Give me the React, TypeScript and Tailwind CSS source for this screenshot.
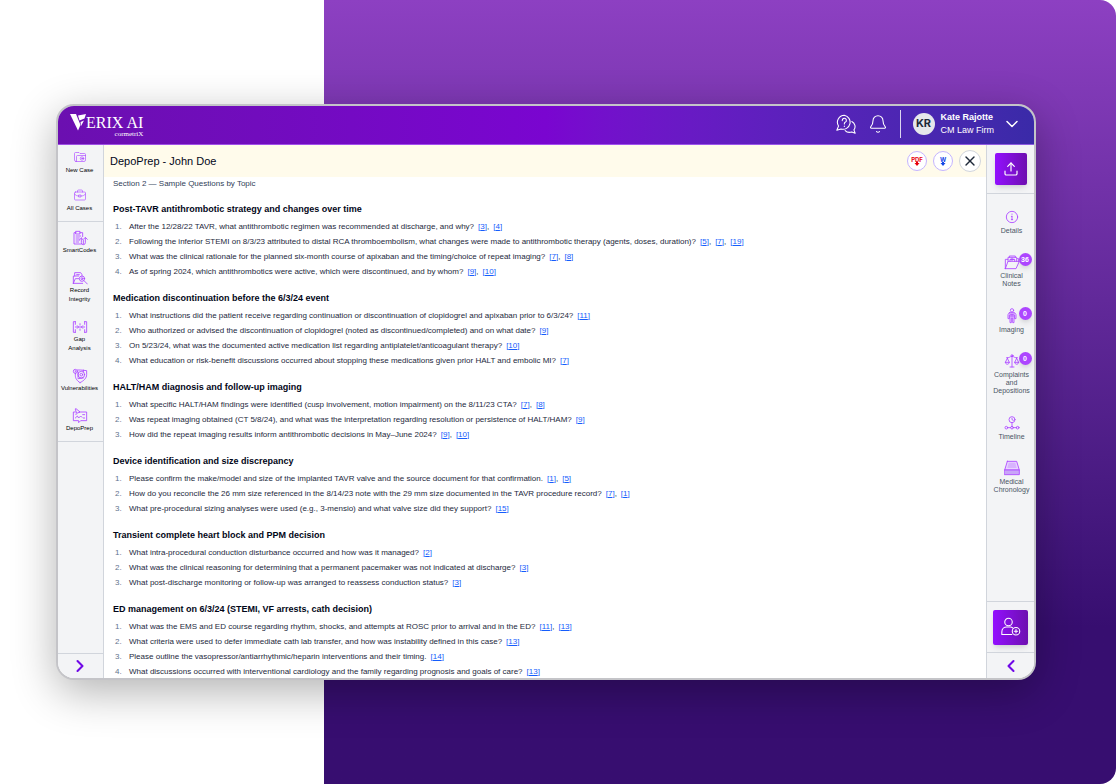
import type { ReactNode } from "react"
import { Bell, ChevronDown, ChevronLeft, ChevronRight, Upload, X } from "lucide-react"

type Question = { text: string; refs: number[] }
type Topic = { title: string; questions: Question[] }

const topics: Topic[] = [
  {
    title: "Post-TAVR antithrombotic strategy and changes over time",
    questions: [
      { text: "After the 12/28/22 TAVR, what antithrombotic regimen was recommended at discharge, and why?", refs: [3, 4] },
      {
        text: "Following the inferior STEMI on 8/3/23 attributed to distal RCA thromboembolism, what changes were made to antithrombotic therapy (agents, doses, duration)?",
        refs: [5, 7, 19],
      },
      { text: "What was the clinical rationale for the planned six-month course of apixaban and the timing/choice of repeat imaging?", refs: [7, 8] },
      { text: "As of spring 2024, which antithrombotics were active, which were discontinued, and by whom?", refs: [9, 10] },
    ],
  },
  {
    title: "Medication discontinuation before the 6/3/24 event",
    questions: [
      { text: "What instructions did the patient receive regarding continuation or discontinuation of clopidogrel and apixaban prior to 6/3/24?", refs: [11] },
      { text: "Who authorized or advised the discontinuation of clopidogrel (noted as discontinued/completed) and on what date?", refs: [9] },
      { text: "On 5/23/24, what was the documented active medication list regarding antiplatelet/anticoagulant therapy?", refs: [10] },
      { text: "What education or risk-benefit discussions occurred about stopping these medications given prior HALT and embolic MI?", refs: [7] },
    ],
  },
  {
    title: "HALT/HAM diagnosis and follow-up imaging",
    questions: [
      { text: "What specific HALT/HAM findings were identified (cusp involvement, motion impairment) on the 8/11/23 CTA?", refs: [7, 8] },
      { text: "Was repeat imaging obtained (CT 5/8/24), and what was the interpretation regarding resolution or persistence of HALT/HAM?", refs: [9] },
      { text: "How did the repeat imaging results inform antithrombotic decisions in May–June 2024?", refs: [9, 10] },
    ],
  },
  {
    title: "Device identification and size discrepancy",
    questions: [
      { text: "Please confirm the make/model and size of the implanted TAVR valve and the source document for that confirmation.", refs: [1, 5] },
      { text: "How do you reconcile the 26 mm size referenced in the 8/14/23 note with the 29 mm size documented in the TAVR procedure record?", refs: [7, 1] },
      { text: "What pre-procedural sizing analyses were used (e.g., 3-mensio) and what valve size did they support?", refs: [15] },
    ],
  },
  {
    title: "Transient complete heart block and PPM decision",
    questions: [
      { text: "What intra-procedural conduction disturbance occurred and how was it managed?", refs: [2] },
      { text: "What was the clinical reasoning for determining that a permanent pacemaker was not indicated at discharge?", refs: [3] },
      { text: "What post-discharge monitoring or follow-up was arranged to reassess conduction status?", refs: [3] },
    ],
  },
  {
    title: "ED management on 6/3/24 (STEMI, VF arrests, cath decision)",
    questions: [
      { text: "What was the EMS and ED course regarding rhythm, shocks, and attempts at ROSC prior to arrival and in the ED?", refs: [11, 13] },
      { text: "What criteria were used to defer immediate cath lab transfer, and how was instability defined in this case?", refs: [13] },
      { text: "Please outline the vasopressor/antiarrhythmic/heparin interventions and their timing.", refs: [14] },
      { text: "What discussions occurred with interventional cardiology and the family regarding prognosis and goals of care?", refs: [13] },
    ],
  },
]

function Glyph({ children, className = "size-4" }: { children: ReactNode; className?: string }) {
  return (
    <svg
      viewBox="0 0 24 24"
      fill="none"
      stroke="currentColor"
      strokeWidth="1.3"
      strokeLinecap="round"
      strokeLinejoin="round"
      aria-hidden="true"
      className={className}
    >
      {children}
    </svg>
  )
}

const FolderGear = () => (
  <Glyph className="size-3">
    <path d="M4 21h16a3 3 0 0 0 3-3V7a2 2 0 0 0-2-2h-9l-2-2H3a2 2 0 0 0-2 2v13a3 3 0 0 0 3 3z" />
    <path d="M5 20V11a2 2 0 0 1 2-2h16" />
    <circle cx="16" cy="15" r="3.500" />
    <circle cx="16" cy="15" r="1" />
  </Glyph>
)

const BriefcaseIcon = () => (
  <Glyph className="size-3">
    <path d="M3 6h18a2 2 0 0 1 2 2v12a2 2 0 0 1-2 2H3a2 2 0 0 1-2-2V8a2 2 0 0 1 2-2zM7 6V4a2 2 0 0 1 2-2h6a2 2 0 0 1 2 2v2" />
    <path d="M1 10c2 3 5 4 9 4M23 10c-2 3-5 4-9 4M10 12h4v4h-4z" />
  </Glyph>
)

const ClipboardCode = () => (
  <Glyph>
    <path d="M6 4H3v17h11M12 4h4v6M6 2h6v4H6z" />
    <path d="M6 9h7M6 12h5M6 15h5M6 18h4" />
    <path d="M11 15l3-3 3 3M14 12v7a3 3 0 0 0 6 0v-7M17 14l3-3 3 3M17 16v5" />
  </Glyph>
)

const FolderSearch = () => (
  <Glyph>
    <path d="M4 9V4h9l2 3v2M2 20V9h8M2 20h14M2 20l3-7h5" />
    <path d="M7 7h4" />
    <circle cx="15" cy="13" r="4" />
    <circle cx="15" cy="13" r="1.500" />
    <path d="M18 16l5 5" />
  </Glyph>
)

const GapIcon = () => (
  <Glyph>
    <path d="M5 4H2v16h3M19 4h3v16h-3M5 4v4M5 16v4M19 4v4M19 16v4" />
    <path d="M5 12h5M8 10l2 2-2 2M19 12h-5M16 10l-2 2 2 2M12 7v2M12 11v2M12 15v2" />
  </Glyph>
)

const ShieldTarget = () => (
  <Glyph>
    <path d="M12 22c-5-3-7-7-7-11V8M8 3h5l9 1v6c0 5-4 9-10 12" />
    <circle cx="14" cy="10" r="5" />
    <circle cx="14" cy="10" r="2" />
    <circle cx="5" cy="5" r="3" />
    <path d="M5 4v2M9 6v8M17 3v3M9 16l8-1" />
  </Glyph>
)

const ChatPen = () => (
  <Glyph>
    <path d="M11 6h11v13H13l-3 3v-3H2V6h3" />
    <path d="M6 1l6 5-5 2-2-6zM5 15l3-3 2 3 3-3 2 2M17 15h2M16 10h3M6 9v1" />
  </Glyph>
)

const InfoCircle = () => (
  <Glyph>
    <circle cx="12" cy="12" r="8.500" />
    <path d="M12 11v5M11 11h1M11 16h2M12 7.500v.5" />
  </Glyph>
)

const FilesFolder = () => (
  <Glyph>
    <path d="M2 22V8h4M2 22h16l5-11H6L2 22zM22 11V7h-2" />
    <path d="M6 11V5h13v6M8 5V3h9v2M9 11V8h7v3M12 6v4M10 8h5" />
  </Glyph>
)

const BodyScan = () => (
  <Glyph>
    <circle cx="12" cy="3.500" r="2.500" />
    <path d="M8 7h8l2 3v6h-2v-5M8 7l-2 3v6h2v-5M9 8v14h2v-7h2v7h2V8" />
    <path d="M10 10h4M10 12h4M12 8v6" />
  </Glyph>
)

const Scales = () => (
  <Glyph>
    <path d="M12 4v17M9 21h6M4 7c4 1 5-2 8-2s4 3 8 2" />
    <path d="M5 8l-3 6h6L5 8zM19 8l-3 6h6l-3-6zM2 14c0 4 6 4 6 0M16 14c0 4 6 4 6 0" />
    <circle cx="12" cy="4" r="1.500" />
  </Glyph>
)

const TimelineIcon = () => (
  <Glyph>
    <circle cx="12" cy="7" r="4.500" />
    <path d="M12 5v2l2 1M12 12v5M5 19h5M14 19h5" />
    <circle cx="3.500" cy="19" r="2" />
    <circle cx="12" cy="19" r="2" />
    <circle cx="20.500" cy="19" r="2" />
  </Glyph>
)

const DriveIcon = () => (
  <Glyph>
    <path d="M5 2h14l4 13H1L5 2z" fill="#e9d5ff" />
    <path d="M7 4h10l2 8H5z" fill="#d8b4fe" stroke="none" />
    <path d="M1 15h22v7H1z" fill="#c9a5f8" />
  </Glyph>
)

type RailItem = { label: string; icon: ReactNode; count?: number; box?: string }

const leftMain: RailItem[] = [
  { label: "New Case", icon: <FolderGear /> },
  { label: "All Cases", icon: <BriefcaseIcon /> },
]

const leftTools: RailItem[] = [
  { label: "SmartCodes", icon: <ClipboardCode /> },
  { label: "Record\nIntegrity", icon: <FolderSearch /> },
  { label: "Gap\nAnalysis", icon: <GapIcon /> },
  { label: "Vulnerabilities", icon: <ShieldTarget /> },
  { label: "DepoPrep", icon: <ChatPen /> },
]

const rightItems: RailItem[] = [
  { label: "Details", icon: <InfoCircle />, box: "h-[45px]" },
  { label: "Clinical Notes", icon: <FilesFolder />, count: 36, box: "h-[54px]" },
  { label: "Imaging", icon: <BodyScan />, count: 0, box: "h-[45px]" },
  { label: "Complaints and Depositions", icon: <Scales />, count: 0, box: "h-[62px]" },
  { label: "Timeline", icon: <TimelineIcon />, box: "h-[45px]" },
  { label: "Medical Chronology", icon: <DriveIcon />, box: "h-[45px]" },
]

function LeftButton({ item, className = "" }: { item: RailItem; className?: string }) {
  return (
    <button type="button" className={`flex w-full flex-col items-center pr-0.5 text-[6px] leading-[9px] text-black ${className}`}>
      <span className="text-purple-500">{item.icon}</span>
      <span className="text-center whitespace-pre">{item.label}</span>
    </button>
  )
}

function Logo() {
  return (
    <a href="#" className="flex items-start pt-0.5 text-white" aria-label="Verix AI">
      <svg viewBox="0 0 16 17" className="mt-0.5 h-[17px] w-4" fill="currentColor" aria-hidden="true">
        <path d="M0 0h6l4.500 11-2.500 5.500z" />
        <path d="M8 1.500L16 0 14.500 4.500 9.500 6.500zM10.500 8L14 6.500 11 12z" />
      </svg>
      <span className="flex flex-col items-end pt-[3px] font-['Liberation_Serif',serif]">
        <span className="text-base leading-[15px]">ERIX AI</span>
        <span className="text-[7px] leading-2">cormetriX</span>
      </span>
    </a>
  )
}

function Header() {
  return (
    <header className="flex h-[39px] shrink-0 items-center justify-between border-b border-purple-400/60 bg-linear-to-r from-[#6b0fb0] via-[#7a05d0] to-[#3a2aa8] px-3 pb-[3px] text-white">
      <Logo />
      <div className="flex items-center">
        <button type="button" aria-label="Help" className="mr-3">
          <Glyph className="size-5">
            <path d="M10 1.500a8.500 8.500 0 0 0-7 13l-2 5 5-1.500a8.500 8.500 0 1 0 4-16.500z" />
            <path d="M7.500 8a2.500 2.500 0 1 1 3.500 2c-1 .5-1 1-1 2M10 14.500v.5" />
            <path d="M19 9c4 2 5 7 2.500 10l1.500 4-4-1.500c-3 1-6 .5-8-1.500" />
          </Glyph>
        </button>
        <button type="button" aria-label="Notifications">
          <Bell className="size-5" strokeWidth={1.3} />
        </button>
        <span className="mx-3 h-7 w-px bg-white/80" />
        <button type="button" className="flex items-center text-left">
          <span className="flex size-[22px] items-center justify-center rounded-full bg-gray-200 font-[Inter] text-[11px] font-bold text-gray-800">KR</span>
          <span className="ml-1.5 text-[9px] leading-[13px]">
            <span className="block font-bold">Kate Rajotte</span>
            <span className="block">CM Law Firm</span>
          </span>
          <ChevronDown className="ml-2 size-5" strokeWidth={1.8} />
        </button>
      </div>
    </header>
  )
}

function ExportButton({ label, className }: { label: string; className: string }) {
  return (
    <button
      type="button"
      aria-label={`Download ${label}`}
      className={`flex size-5 flex-col items-center justify-center rounded-full border border-violet-300 bg-white font-[Inter] text-[6px] leading-[5px] font-bold ${className}`}
    >
      {label}
      <svg viewBox="0 0 6 4" className="h-1 w-1.5" fill="currentColor" aria-hidden="true">
        <path d="M2 0h2v1h1.500L3 4 .5 1H2z" />
      </svg>
    </button>
  )
}

function TopicBlock({ topic }: { topic: Topic }) {
  return (
    <section className="mb-3.5">
      <h2 className="mb-1 text-[9px] leading-[11px] font-bold text-slate-950">{topic.title}</h2>
      <ol>
        {topic.questions.map((q, i) => (
          <li key={q.text} className="flex text-[8px] leading-[15px] whitespace-nowrap text-slate-800">
            <span className="w-4 pl-0.5 text-slate-500">{i + 1}.</span>
            <span>{q.text}</span>
            <span className="ml-1 flex gap-1">
              {q.refs.map((n, k) => (
                <span key={n}>
                  <a href={`#ref-${n}`} className="text-blue-600 underline">
                    [{n}]
                  </a>
                  {k < q.refs.length - 1 && ","}
                </span>
              ))}
            </span>
          </li>
        ))}
      </ol>
    </section>
  )
}

export default function App() {
  return (
    <div className="grid h-screen grid-cols-1 grid-rows-1 bg-white font-['Liberation_Sans',sans-serif]">
      <div className="col-start-1 row-start-1 ml-[29%] rounded-r-2xl bg-linear-to-b from-[#8d40c2] to-[#370e70] to-80%" />
      <div className="z-10 col-start-1 row-start-1 mx-14 mr-20 mt-26 mb-26 flex min-h-0 flex-col overflow-hidden rounded-[18px] border-2 border-[#c4c4c8] bg-white shadow-[0_12px_44px_rgba(0,0,0,0.3)]">
        <Header />
        <div className="flex min-h-0 flex-1">
          <nav className="flex w-[46px] shrink-0 flex-col border-r border-gray-300 bg-gray-100">
            <div className="flex flex-col gap-3.5 border-b border-gray-300 pt-1.5 pb-2">
              {leftMain.map((item) => (
                <LeftButton key={item.label} item={item} className="gap-[3px]" />
              ))}
            </div>
            <div className="flex flex-col gap-[15px] border-b border-gray-300 py-2">
              {leftTools.map((item) => (
                <LeftButton key={item.label} item={item} />
              ))}
            </div>
            <button type="button" aria-label="Expand menu" className="mt-auto flex h-[25px] items-center justify-center border-t border-gray-300 pr-0.5 text-violet-700">
              <ChevronRight className="size-5" strokeWidth={2.5} />
            </button>
          </nav>

          <main className="flex min-w-0 flex-1 flex-col overflow-hidden">
            <div className="flex h-8 shrink-0 items-center justify-between bg-[#fffbeb] pr-[5px] pl-1.5">
              <h1 className="text-[11px] text-slate-950">DepoPrep - John Doe</h1>
              <div className="flex items-center gap-1.5">
                <ExportButton label="PDF" className="text-red-600" />
                <ExportButton label="W" className="text-blue-700" />
                <button type="button" aria-label="Close" className="flex size-[22px] items-center justify-center rounded-full border border-gray-300 bg-white text-gray-800">
                  <X className="size-4" />
                </button>
              </div>
            </div>
            <div className="min-h-0 flex-1 overflow-hidden pt-px pl-[9px]">
              <p className="mb-3.5 text-[8px] leading-3 text-slate-700">Section 2 — Sample Questions by Topic</p>
              {topics.map((topic) => (
                <TopicBlock key={topic.title} topic={topic} />
              ))}
            </div>
          </main>

          <aside className="flex w-12 shrink-0 flex-col items-center border-l border-gray-300 bg-gray-100">
            <div className="flex h-[49px] w-full items-center justify-center border-b border-gray-300">
              <button type="button" aria-label="Upload" className="flex size-8 items-center justify-center rounded-xs bg-linear-to-r from-[#930fff] to-[#6d0fb0] text-white shadow-md">
                <Upload className="size-4" strokeWidth={1.8} />
              </button>
            </div>
            <div className="flex w-full flex-1 flex-col pt-[15px] pl-0.5">
              {rightItems.map((item) => (
                <button key={item.label} type="button" className={`flex w-full flex-col items-center gap-0.5 text-[7px] leading-[8px] text-gray-600 ${item.box}`}>
                  <span className="relative text-purple-500">
                    {item.icon}
                    {item.count !== undefined && (
                      <span className="absolute -top-px left-[15px] flex size-[13px] items-center justify-center rounded-full bg-purple-500 text-[7px] font-bold text-white shadow-md">
                        {item.count}
                      </span>
                    )}
                  </span>
                  <span className="px-1">{item.label}</span>
                </button>
              ))}
            </div>
            <div className="flex h-[51px] w-full items-center justify-center border-t border-gray-300">
              <button type="button" aria-label="Add person" className="flex size-[35px] items-center justify-center rounded-xs bg-linear-to-r from-[#930fff] to-[#6d0fb0] text-white shadow-md">
                <Glyph className="size-5">
                  <circle cx="9" cy="6" r="4.500" />
                  <path d="M13 21H1v-3c0-4 3-6 6-6h4c1 0 2 0 3 1" />
                  <circle cx="18" cy="17" r="4.500" />
                  <path d="M18 15v4M16 17h4" />
                </Glyph>
              </button>
            </div>
            <button type="button" aria-label="Collapse panel" className="flex h-[26px] w-full items-center justify-center border-t border-gray-300 text-violet-700">
              <ChevronLeft className="size-5" strokeWidth={2.5} />
            </button>
          </aside>
        </div>
      </div>
    </div>
  )
}
